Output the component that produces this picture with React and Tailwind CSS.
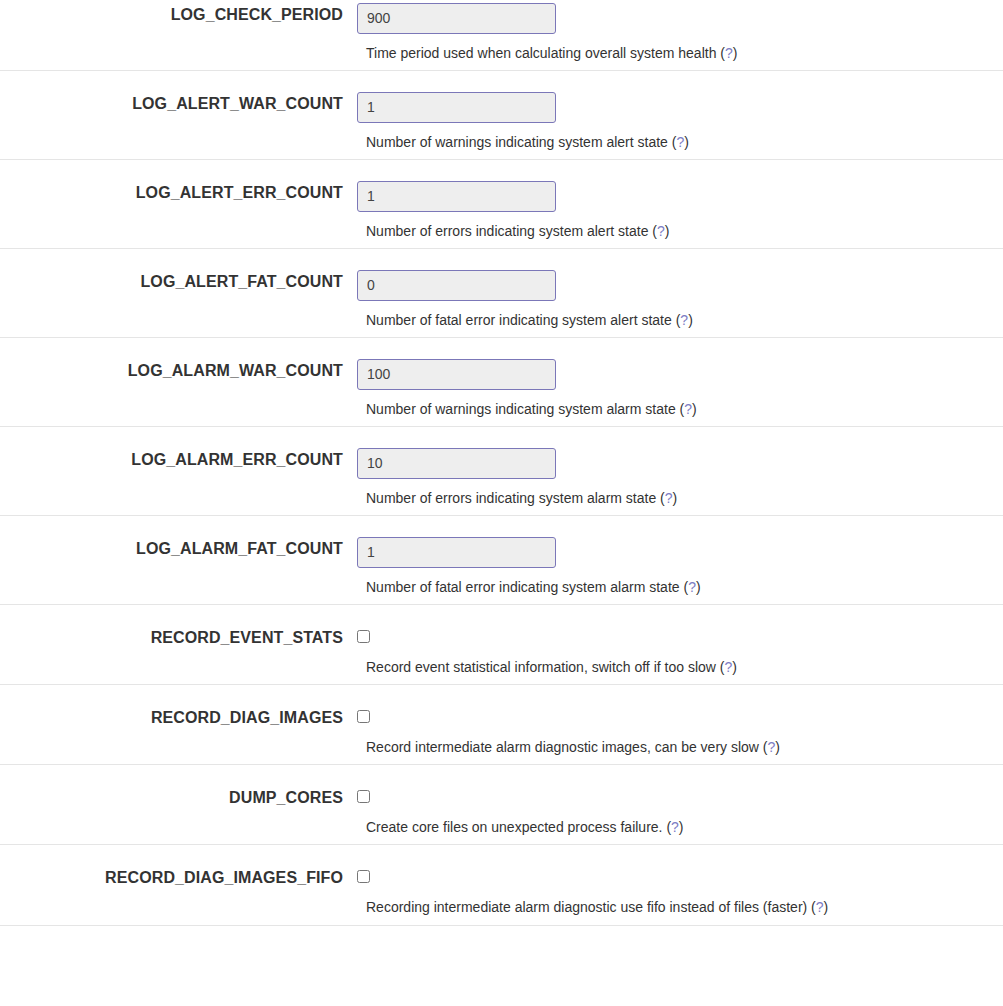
import React from "react";

const FIELDS = [
  { name: "LOG_CHECK_PERIOD", type: "number", value: "900", help: "Time period used when calculating overall system health" },
  { name: "LOG_ALERT_WAR_COUNT", type: "number", value: "1", help: "Number of warnings indicating system alert state" },
  { name: "LOG_ALERT_ERR_COUNT", type: "number", value: "1", help: "Number of errors indicating system alert state" },
  { name: "LOG_ALERT_FAT_COUNT", type: "number", value: "0", help: "Number of fatal error indicating system alert state" },
  { name: "LOG_ALARM_WAR_COUNT", type: "number", value: "100", help: "Number of warnings indicating system alarm state" },
  { name: "LOG_ALARM_ERR_COUNT", type: "number", value: "10", help: "Number of errors indicating system alarm state" },
  { name: "LOG_ALARM_FAT_COUNT", type: "number", value: "1", help: "Number of fatal error indicating system alarm state" },
  { name: "RECORD_EVENT_STATS", type: "bool", help: "Record event statistical information, switch off if too slow" },
  { name: "RECORD_DIAG_IMAGES", type: "bool", help: "Record intermediate alarm diagnostic images, can be very slow" },
  { name: "DUMP_CORES", type: "bool", help: "Create core files on unexpected process failure." },
  { name: "RECORD_DIAG_IMAGES_FIFO", type: "bool", help: "Recording intermediate alarm diagnostic use fifo instead of files (faster)" },
];

function Row({ field, first, last }) {
  const isBool = field.type === "bool";
  return (
    <div
      className={`grid grid-cols-[343px_1fr] gap-x-[14px] border-b border-[#e5e5e5] ${
        first ? "pt-[3px]" : "pt-[21px]"
      } ${last ? "pb-2" : "pb-[7px]"}`}
    >
      <label className="mt-[2px] text-right text-[16px] font-bold leading-5 tracking-[0.1px] text-[#333]">
        {field.name}
      </label>
      <div>
        {isBool ? (
          <div className="h-[31px]">
            <input type="checkbox" className="m-0 mt-[4px] h-[13px] w-[13px]" />
          </div>
        ) : (
          <input
            type="text"
            defaultValue={field.value}
            className="block h-[31px] w-[199px] rounded-[3px] border border-[#7b77b8] bg-[#eeeeee] px-[9px] pb-[2px] text-[14px] text-[#444] outline-none"
          />
        )}
        <p className={`pl-[9px] text-[14px] leading-5 text-[#333] ${isBool ? "" : "mt-[9px]"}`}>
          {field.help} (<a className="text-[#7d7dc4]">?</a>)
        </p>
      </div>
    </div>
  );
}

export default function App() {
  return (
    <div
      className="min-h-[1006px] bg-white"
      style={{ fontFamily: '"Liberation Sans", Arial, sans-serif' }}
    >
      {FIELDS.map((f, i) => (
        <Row key={f.name} field={f} first={i === 0} last={i === FIELDS.length - 1} />
      ))}
    </div>
  );
}
